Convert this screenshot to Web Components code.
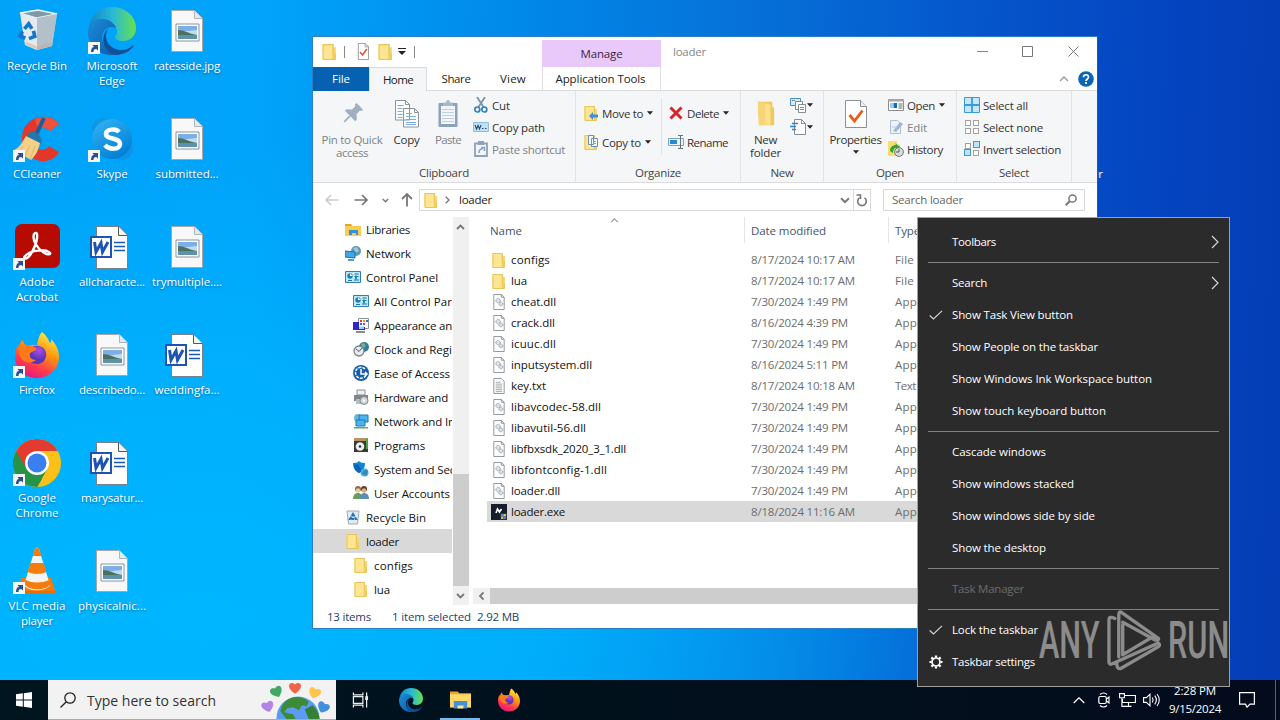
<!DOCTYPE html>
<html lang="en">
<head>
<meta charset="utf-8">
<title>Desktop</title>
<style>
  html, body { margin: 0; height: 100%; overflow: hidden; }
  body { font-family: "Open Sans", "Noto Sans", sans-serif; font-size: 11.5px; line-height: 15px; }
</style>
</head>
<body>
<desk-top></desk-top>

<script>
const folder = '<path d="M1.5 1h10v3l2.5 0v11.5h-12.5z" fill="#f7d774"/><path d="M1.5 1h9v14h-9z" fill="#fde594"/><path d="M2 1.5h9.5v9h1.8v5H2z" fill="none" stroke="#e8c55c"/><path d="M11 10.5h2v4.5h-2z" fill="#f5cd57"/>';
const page = '<path d="M2.5.5h8l4 4v15h-12z" fill="#fff" stroke="#8b8f94"/><path d="M10.5.5v4h4" fill="none" stroke="#8b8f94"/>';
const edge = `<defs><linearGradient id="ea" x1="0" y1="0" x2="1" y2="0"><stop offset="0" stop-color="#1683cb"/><stop offset=".5" stop-color="#27b9d7"/><stop offset="1" stop-color="#69e04e"/></linearGradient><linearGradient id="eb" x1="0" y1="0" x2="1" y2="1"><stop offset="0" stop-color="#1b8cd9"/><stop offset="1" stop-color="#0d5ba9"/></linearGradient></defs>
  <path d="M1 20C3 8 12 0 24 0c14 0 24 10 24 21 0 9-7 13-13 13-5 0-8-2-8-4 0-1 2-2 2-6 0-5-5-10-13-10C9 14 3 16 1 20z" fill="url(#ea)"/>
  <path d="M0 25c0-8 7-13 14-13 8 0 13 5 14 9-7-3-14 2-14 10 0 9 7 16 14 17C13 50 0 39 0 25z" fill="url(#eb)"/>
  <path d="M20 22c-6 11 3 21 13 21 5 0 9-2 11-4 1-1 2 0 1 1C40 46 33 48 27 48 15 45 11 30 20 22z" fill="#11519b"/>`;
const firefox = `<defs><linearGradient id="ff" x1=".8" y1="0" x2=".3" y2="1"><stop offset="0" stop-color="#fff44f"/><stop offset=".4" stop-color="#ff980e"/><stop offset=".75" stop-color="#ff3750"/><stop offset="1" stop-color="#e31587"/></linearGradient><radialGradient id="fp" cx=".6" cy=".25"><stop offset="0" stop-color="#b04bea"/><stop offset="1" stop-color="#5b35b8"/></radialGradient></defs>
  <path d="M29 1c5 4 6 7 8 11 2-1 1-4 1-4 5 5 8 11 8 18 0 12-10 21-22 21S2 38 2 25c0-6 2-9 3-12 0 2 1 3 1 3 0-3 2-6 4-7 0 3 2 5 6 6 3-2 6-1 8-1 1-5 2-10 5-13z" fill="url(#ff)"/>
  <path d="M15 25c0-7 4-11 11-10 5 1 8 5 7 10-1 6-5 8-9 8-5 0-9-3-9-8z" fill="url(#fp)"/><path d="M6 16c5-3 9-2 14 0 3 0 4 1 3 3l-6 3c-1 4 1 7 6 7-4 4-12 3-15-2-2-4-3-7-2-11z" fill="#ff7a18"/>`;
const panel = '<path d="M.5 2.5h15v11H.5z" fill="#bfe8fa" stroke="#2f7fb5"/><circle cx="5" cy="7" r="2.7" fill="#1680c4"/><path d="M5 4.3V7h2.7z" fill="#fff"/><path d="M9.5 5h4M9.5 7.5h4M3 11.5h4M9 11h5" stroke="#2676a8"/><path d="M10 6.5h2v4h-2z" fill="#1b8ac9"/>';
const tile = (x, y, on) => `<rect x="${x}" y="${y}" width="${on ? 6 : 5}" height="${on ? 6 : 5}" fill="${on ? '#bfe3fa' : '#fff'}" stroke="${on ? '#3b9bd8' : '#a8a09c'}"/>`;
const heart = (x, y, c, r) => `<path transform="translate(${x} ${y}) rotate(${r})" d="M0 6C-11-1-5-8 0-3.500 5-8 11-1 0 6z" fill="${c}"/>`;

const ICONS = {
  folder: ['0 0 16 16', folder],
  qatCheck: ['0 0 16 20', page + '<path d="M4.5 10.5l3 3.5 5-7" fill="none" stroke="#e2572b" stroke-width="1.8"/>'],
  down: ['0 0 7 4', '<path d="M0 0h7L3.5 4z" fill="#222"/>'],
  qatDown: ['0 0 8 7', '<path d="M0 .5h8" stroke="#222"/><path d="M0 3h8L4 7z" fill="#222"/>'],
  min: ['0 0 11 11', '<path d="M0 5.5h11" stroke="#888"/>'],
  max: ['0 0 11 11', '<path d="M.5.5h10v10H.5z" fill="none" stroke="#777"/>'],
  close: ['0 0 11 11', '<path d="M.5.5l10 10M10.5.5l-10 10" stroke="#777"/>'],
  up: ['0 0 10 6', '<path d="M1 5l4-4 4 4" fill="none" stroke="#999" stroke-width="1.400"/>'],
  help: ['0 0 16 16', '<circle cx="8" cy="8" r="7.8" fill="#0a65b4"/><path d="M5.5 6.2C5.5 3 10.5 3 10.5 6c0 2-2.5 2-2.5 4M8 11v2" fill="none" stroke="#fff" stroke-width="1.7"/>'],
  pin: ['0 0 24 24', '<g transform="rotate(45 12 12)"><path d="M7 0h10v2.500l-1.500 1v5l4.500 4v2.500H4v-2.500l4.500-4v-5L7 2.500z" fill="#9fb0c2"/><path d="M12 15v9" stroke="#9fb0c2" stroke-width="2"/></g>'],
  copy: ['0 0 26 30', '<path d="M1.500 1.500h10l4 4V21h-14zM9.500 9.500h11l4 4V28h-15z" fill="#fff" stroke="#8b939c"/><path d="M11.500 1.500v4h4M20.500 9.500v4h4" fill="none" stroke="#8b939c"/><path d="M3.500 6.500h6M3.500 9.500h5M3.500 12.500h5M3.500 15.500h5M3.500 18.500h5M12 14.500h6M12 17.500h10M12 20.500h10M12 23.500h10M12 25.500h10" stroke="#78aee0"/>'],
  paste: ['0 0 22 30', '<rect x="1.500" y="4" width="19" height="24" rx="1" fill="#8da2ba"/><path d="M4 7h14v18H4z" fill="#f0f5fa"/><path d="M5 10.500h12M5 13.500h12M5 16.500h12M5 19.500h12M5 22.500h12" stroke="#c3d0de"/><path d="M6 7V3.500h3C9 0 13 0 13 3.500h3V7z" fill="#aab9ca"/>'],
  cut: ['0 0 16 16', '<path d="M4 0l6.500 10M12 0L5.500 10" stroke="#7794b0" stroke-width="1.800"/><circle cx="4.300" cy="12.500" r="2.500" fill="none" stroke="#2d83bd" stroke-width="1.700"/><circle cx="11.300" cy="12.500" r="2.500" fill="none" stroke="#2d83bd" stroke-width="1.700"/>'],
  path: ['0 0 16 10', '<path d="M.5.5h15v9H.5z" fill="#bfe1f7" stroke="#93bddd"/><path d="M2 3l1.500 4L5 3.500 6.500 7 8 3M9 6.500h1.500M12 6.500h1.500" fill="none" stroke="#274c70" stroke-width="1.100"/>'],
  shortcut: ['0 0 14 16', '<path d="M1 2.500h12V15H1z" fill="#f2f6fa" stroke="#8da2ba" stroke-width="1.800"/><path d="M4 0h6v4H4z" fill="#8da2ba"/><path d="M5 12c0-3 1-4 3-4V6.500h2.500V10" fill="none" stroke="#8da2ba" stroke-width="1.600"/>'],
  moveTo: ['0 0 16 16', folder + '<path d="M6 11l4-4v2.500h5v3h-5V15z" fill="#3f8edb"/>'],
  copyTo: ['0 0 16 16', folder + '<path d="M5.500 1.500h5v9h-5zM8.500 4.500h6v8h-6z" fill="#f4faff" stroke="#6b90b5"/><path d="M10 7.500h3M10 9.500h3" stroke="#7aa7d5"/>'],
  del: ['0 0 14 14', '<path d="M1.500 1.500l11 11M12.500 1.500l-11 11" stroke="#d9232b" stroke-width="3"/>'],
  rename: ['0 0 16 14', '<path d="M.5 3.500h15v7H.5z" fill="#e8f3fb" stroke="#75a6cb"/><path d="M2 5h7v4H2z" fill="#2c88cc"/><path d="M12.500.500v13M10 .5h5M10 13.500h5" stroke="#66717c"/>'],
  newFolder: ['0 0 22 28', '<path d="M2 1h16v6h2v20H3z" fill="#efc860"/><path d="M2 1l14 3v22L4 27z" fill="#fde08a"/><path d="M2 1h5l3 2v23l-6 1z" fill="#f7d478"/>'],
  newItem: ['0 0 16 16', '<path d="M.5 1.500h10v7H.5z" fill="#d5eaf8" stroke="#4a8fbe"/><path d="M5.500 4.500h7v8h-7z" fill="#fff" stroke="#848c94"/><path d="M8.500 7.500h7v8h-7z" fill="#fff" stroke="#848c94"/><path d="M10 10.500h4M10 12.500h4M2 3.500h3" stroke="#848c94"/>'],
  easy: ['0 0 16 16', '<path d="M4.500.500h7l4 4v11h-11z" fill="#fff" stroke="#848c94"/><path d="M11.500.500v4h4" fill="none" stroke="#848c94"/><path d="M2 4.500h6M0 7.500h6M2 10.500h4" stroke="#2c83c5" stroke-width="1.500"/>'],
  props: ['0 0 22 28', '<path d="M.5.500h15l6 6v21H.5z" fill="#fff" stroke="#8d9195"/><path d="M15.500.500v6h6" fill="#eee" stroke="#8d9195"/><path d="M4.500 15l5 6 8-10.500" fill="none" stroke="#e85c1c" stroke-width="2.800"/>'],
  open: ['0 0 16 12', '<path d="M.5.500h15v11H.5z" fill="#fff" stroke="#8a8d90"/><path d="M0 0h16v2.500H0z" fill="#a6a6a6"/><path d="M2 4h3v5H2z" fill="#9fcdf0"/><path d="M5.500 4H9v5H5.500z" fill="#0b6fc0"/><path d="M10.500 5h4M10.500 7h4M10.500 9h4" stroke="#666"/>'],
  edit: ['0 0 16 16', '<path d="M2.500 1.500h7l3 3v10h-10z" fill="#edf3fa" stroke="#aebfd1"/><path d="M5 12l7-9 3 2-7 8z" fill="#9db5ce"/><path d="M4 8h5" stroke="#b5c8dc"/>'],
  history: ['0 0 16 16', '<path d="M0 0h9v3l3 1v11H0z" fill="#f9dd72"/><path d="M2 10c0-4 3-6 6-6l-1-2 5 4-4 3V7c-2 0-3 2-3 5z" fill="#34a234"/><circle cx="11" cy="11" r="4.400" fill="#d8ddd8" stroke="#6d7770"/><path d="M11 8v3H8" fill="none" stroke="#555"/>'],
  selAll: ['0 0 16 16', '<path d="M.5.500h15v15H.5z" fill="#c5e6fb" stroke="#3b9bd8"/><path d="M8 0v16M0 8h16" stroke="#3b9bd8" stroke-width="1.800"/>'],
  selNone: ['0 0 16 16', tile(1.5, 1.5) + tile(9.5, 1.5) + tile(1.5, 9.5) + tile(9.5, 9.5)],
  selInv: ['0 0 16 16', tile(1.5, 2.5) + tile(9.5, .5, 1) + tile(.5, 8.5, 1) + tile(9.5, 9.5)],
  back: ['0 0 14 12', '<path d="M1 6h12.500M6 1L1 6l5 5" fill="none" stroke="#ccc" stroke-width="1.500"/>'],
  fwd: ['0 0 14 12', '<path d="M.5 6H13M8 1l5 5-5 5" fill="none" stroke="#777" stroke-width="1.700"/>'],
  upArrow: ['0 0 12 14', '<path d="M6 13.500V1M1 6l5-5 5 5" fill="none" stroke="#777" stroke-width="1.800"/>'],
  chev: ['0 0 9 6', '<path d="M1 1l3.500 3.500L8 1" fill="none" stroke="#777" stroke-width="1.800"/>'],
  right: ['0 0 5 8', '<path d="M.7.700L4 4 .7 7.300" fill="none" stroke="#777" stroke-width="1.300"/>'],
  refresh: ['0 0 12 13', '<path d="M3.500 4.300A4.300 4.300 0 1 0 8.500 4.300M.5 1.500h4v4" transform="translate(0 -.5)" fill="none" stroke="#777" stroke-width="1.600"/>'],
  glass: ['0 0 12 12', '<circle cx="7.500" cy="4.500" r="3.600" fill="none" stroke="#777" stroke-width="1.500"/><path d="M5 7L.7 11.300" stroke="#777" stroke-width="2"/>'],
  libraries: ['0 0 16 16', '<path d="M0 3h6l2 2h8v10H0z" fill="#f9cd4f"/><path d="M0 3h6l1 2H0z" fill="#e0a52d"/><path d="M4 9h9v5h-2v-2H7v2H4z" fill="#3a8fd2"/>'],
  network: ['0 0 16 16', '<circle cx="11" cy="6" r="5" fill="#5d98b8"/><path d="M8 3l4-1 2 4-3 2z" fill="#9cc9d3"/><path d="M0 6l10 1v6L0 12z" fill="#3fa8e8" stroke="#1c70aa"/><path d="M3 15h6" stroke="#2579b5" stroke-width="1.500"/>'],
  panel: ['0 0 16 16', panel],
  appearance: ['0 0 16 16', '<path d="M5.500 1.500h10v10h-10z" fill="#fff" stroke="#89909a"/><path d="M7 3h2v2H7z" fill="#e33"/><path d="M10 3h2v2h-2z" fill="#f80"/><path d="M13 3h2v2h-2zM7 6h2v2H7z" fill="#36c"/><path d="M10 6h2v2h-2z" fill="#b3c"/><path d="M0 5h6v5h6v3H0z" fill="#3422cc"/><path d="M6 10l5-1v3H6z" fill="#8fd6ff"/><path d="M3 15h9" stroke="#666" stroke-width="1.500"/>'],
  clock: ['0 0 16 16', '<circle cx="11" cy="6" r="5" fill="#347e9b"/><path d="M8 3l3-1 2 3-3 2z" fill="#77b28b"/><circle cx="6" cy="10" r="5" fill="#e8edf0" stroke="#7b858d" stroke-width="1.300"/><path d="M3 8l3 2.500L9 7" fill="none" stroke="#475866"/>'],
  ease: ['0 0 16 16', '<circle cx="8" cy="8" r="8" fill="#155fae"/><path d="M12 4a5.500 5.500 0 1 0 1 6" fill="none" stroke="#fff" stroke-width="1.400" stroke-dasharray="3 1"/><path d="M8 4v5h6M12 7l2 2-2 2" fill="none" stroke="#fff" stroke-width="1.500"/>'],
  hardware: ['0 0 16 16', '<path d="M4 1h8v5H4z" fill="#eef1f3" stroke="#8a9096"/><path d="M1 6h14v6H1z" fill="#7e858b"/><path d="M3 10h8v5H3z" fill="#b8bec4"/><circle cx="11" cy="11.500" r="4" fill="#cfd6da" stroke="#7e878e"/><circle cx="11" cy="11.500" r="1.200" fill="#fff"/>'],
  netInt: ['0 0 16 16', '<circle cx="5" cy="5" r="4" fill="#6db8d6"/><path d="M6 2h9v7H6z" fill="#49b5ec" stroke="#1d7bb5"/><path d="M3 7h9v6H3z" fill="#49b5ec" stroke="#1d7bb5"/><path d="M1 14h14v1.500H1z" fill="#5fa95d"/>'],
  programs: ['0 0 16 16', '<path d="M1 1h14v14H1z" fill="#3c3933"/><path d="M1 1h14v3H1z" fill="#b89565"/><path d="M13 2h2v10h-2z" fill="#4ba24b"/><circle cx="7" cy="9.500" r="4.300" fill="#eceff1"/><circle cx="7" cy="9.500" r="1.300" fill="#333"/>'],
  system: ['0 0 16 16', '<path d="M0 2c4 0 5-1 6-2 2 2 4 2 6 2 0 6-3 9-6 10C2 10 0 7 0 2z" fill="#1283d6"/><path d="M5 3l4 7-3 2C2 10 1 7 1 4z" fill="#0d62b8"/><circle cx="11.500" cy="11.500" r="4" fill="#37aef0"/><path d="M9 12l3-3 3 1-2 5z" fill="#3d88a8"/>'],
  users: ['0 0 16 16', '<circle cx="5" cy="4" r="3" fill="#8c6b3f"/><circle cx="5" cy="5.500" r="2.200" fill="#efc79d"/><circle cx="11" cy="4" r="3" fill="#54402a"/><circle cx="11" cy="5.500" r="2.200" fill="#dfae82"/><path d="M0 14c0-4 2-6 5-6s4 2 4 6z" fill="#6c9d5b"/><path d="M7 14c0-4 2-6 4-6 3 0 5 2 5 6z" fill="#5b8fb5"/>'],
  binSmall: ['0 0 16 16', '<path d="M2 2h12l-1.500 13h-9z" fill="#e3eaf0" stroke="#9eabb5"/><path d="M8 5l3 5H5z" fill="none" stroke="#1d71c2" stroke-width="2" stroke-dasharray="3 .8"/>'],
  dll: ['0 0 14 17', '<path d="M1.500.500h8l3 3v13h-11z" fill="#fff" stroke="#8c9297"/><path d="M9.500.500v3h3" fill="none" stroke="#8c9297"/><circle cx="6" cy="7" r="2.300" fill="#dfe5e9" stroke="#7f8c96" stroke-dasharray="1 .5"/><circle cx="9" cy="10.500" r="2" fill="#dfe5e9" stroke="#7f8c96" stroke-dasharray="1 .5"/>'],
  txt: ['0 0 14 17', '<path d="M1.500.500h8l3 3v13h-11z" fill="#fff" stroke="#8c9297"/><path d="M3.500 4.500h5M3.500 6.500h7M3.500 8.500h7M3.500 10.500h7M3.500 12.500h7M3.500 14.500h7" stroke="#9ca3a8"/>'],
  exe: ['0 0 16 16', '<path d="M0 0h16v16H0z" fill="#161d2c"/><path d="M5 9l1.500-4 2 3 2-3" fill="none" stroke="#fff" stroke-width="1.700"/><path d="M9 9h7v7H9z" fill="#26344a"/><path d="M10 10h2.500v2.500H10z" fill="#5591cf"/><path d="M12.500 10H15v2.500h-2.500z" fill="#d8c456"/><path d="M10 12.500h2.500V15H10z" fill="#cbb34a"/><path d="M12.500 12.500H15V15h-2.500z" fill="#4585c4"/>'],
  menuRight: ['0 0 8 14', '<path d="M1 1l6 6-6 6" fill="none" stroke="#ddd" stroke-width="1.100"/>'],
  check: ['0 0 14 10', '<path d="M.7 5.500L4.500 9 13 .8" fill="none" stroke="#d8d8d8" stroke-width="1.100"/>'],
  gear: ['0 0 14 14', '<circle cx="7" cy="7" r="4" fill="none" stroke="#fff" stroke-width="1.700"/><path d="M7 .5v2M7 11.500v2M.5 7h2M11.500 7h2M2.400 2.400l1.400 1.400M10.200 10.200l1.400 1.400M2.400 11.600l1.400-1.400M10.200 3.800l1.400-1.400" stroke="#fff" stroke-width="2.200"/>'],
  play: ['0 0 56 62', '<g fill="none" stroke="#fff" stroke-width="3.400" stroke-linejoin="round" stroke-linecap="round"><path d="M52 28L15 2Q12 0 12 5v42M16 15v30l30-18M52 28q2 2-3 2L16 12M8 8Q2 5 2 10v42q0 4 4 2l44-20M10 54q0 6 4 5l38-22q3-2 0-4"/></g>'],
  // taskbar
  start: ['0 0 16 16', '<path d="M0 2.300l6.800-1v6.200H0zM7.800 1.200L16 0v7.500H7.800zM0 8.500h6.800v6.200L0 13.700zM7.800 8.500H16V16l-8.200-1.200z" fill="#fff"/>'],
  search: ['0 0 16 16', '<circle cx="10" cy="6" r="5.200" fill="none" stroke="#222" stroke-width="1.300"/><path d="M6.300 9.700L.5 15.500" stroke="#222" stroke-width="1.300"/>'],
  earth: ['0 0 72 40', '<circle cx="37" cy="39" r="22" fill="#5c9cf0"/><path d="M29 19c7-3 14-1 19 3l-2 5-5-1-3 5-6-3-6 1-3 4 9 2 3 6h-9l-7-9c1-6 5-11 10-13z" fill="#3c8c35"/><path d="M44 30l8-4c4 4 7 9 7 14H48l-2-5z" fill="#357f38"/>' + heart(6, 27, '#b184e5', -15) + heart(15, 12, '#43a863', -25) + heart(34, 8, '#f06548', 0) + heart(54, 13, '#ffc44b', 20) + heart(63, 28, '#4290dc', 25)],
  taskView: ['0 0 18 16', '<path d="M1.500 4.500h10v7h-10zM1.500 0v2.500h10V0M1.500 16v-2.500h10V16M15.500 0v16" fill="none" stroke="#eee" stroke-width="1.300"/><path d="M14 4h3v4h-3z" fill="#eee"/>'],
  edge: ['0 0 48 48', edge],
  explorer: ['0 0 22 20', '<path d="M0 1h8l2 2h12v4H0z" fill="#e5a72f"/><path d="M0 4h22v14H0z" fill="#ffd866"/><path d="M4 11h14v8h-4v-3H8v3H4z" fill="#4392d5"/><path d="M8 16h6v3H8z" fill="#ffe69a"/>'],
  firefox: ['0 0 48 48', firefox],
  trayUp: ['0 0 12 7', '<path d="M.7 6L6 .8 11.300 6" fill="none" stroke="#fff" stroke-width="1.200"/>'],
  meet: ['0 0 12 16', '<rect x=".8" y="4.500" width="7.500" height="7" rx="1.500" fill="none" stroke="#fff" stroke-width="1.200"/><path d="M8.500 7l2.500-2v6L8.500 9M2 2.500C4 .5 7 .5 9 2.500M2 13.500c2 2 5 2 7 0" fill="none" stroke="#fff" stroke-width="1.100"/>'],
  net: ['0 0 17 14', '<path d="M5 2.500h11.400v7H3.500V6M9.500 9.500V13M6.500 13.400h6M.6.600h4.800v4.200H.6zM2.900 5v8.400h4" fill="none" stroke="#fff" stroke-width="1.100"/>'],
  sound: ['0 0 17 14', '<path d="M.6 4.600h2.800L7 1.200v11.600L3.400 9.400H.6z" fill="none" stroke="#fff" stroke-width="1.100"/><path d="M9.300 4.500c1 1.500 1 3.500 0 5M11.700 2.700c2 2.500 2 6 0 8.600M14 1c3 3.500 3 8.500 0 12" fill="none" stroke="#fff" stroke-width="1.100"/>'],
  note: ['0 0 16 16', '<path d="M.6.600h14.800v11.600H11L8 15.200l-1.500-3H.6z" fill="none" stroke="#fff" stroke-width="1.200"/>'],
  // desktop
  bin: ['0 0 48 48', '<path d="M9 6l15 5 20-5-5 33-15 4-11-5z" fill="#c9d4dc"/><path d="M7 6l18-3 19 4-20 4z" fill="#7f99a9" stroke="#eef5f9" stroke-width="1.300"/><path d="M7 6l17 5v32l-12-5z" fill="#e4eaee"/><path d="M24 11l20-4-5 32-15 4z" fill="#b4c0c9"/><g transform="translate(6.500 7.500) rotate(6) scale(.92)" fill="none" stroke="#1676c8" stroke-width="4"><path d="M7 15l4-6 4 5M17 16l2 6-6 3M9 25l-6-2 2-5"/></g><path d="M13 36l11 5 14-4" fill="none" stroke="#d3a68b" stroke-width="3" opacity=".5"/>'],
  image: ['0 0 48 48', '<path d="M8.500 3.500h23l8 8v33h-31z" fill="#f8f8f8" stroke="#a6a6a6"/><path d="M31.500 3.500v8h8" fill="#dcecf3" stroke="#b0b4b6"/><path d="M13 17h23v17H13z" fill="#fff" stroke="#8994a0"/><path d="M15 19h19v13H15z" fill="#bcdcf2"/><path d="M15 19h19v4l-19 2z" fill="#7eaee8"/><path d="M15 23c6 0 9 3 19 5H15z" fill="#49715d"/><path d="M15 28h19v4H15z" fill="#5e91ac"/>'],
  word: ['0 0 48 48', '<path d="M8.500 3.500h22l9 9v33h-31z" fill="#fff" stroke="#77818b"/><path d="M30.500 3.500v9h9" fill="#f4f4f4" stroke="#555"/><path d="M26 19.500h11M26 23.500h11M26 27.500h11" stroke="#1c58b8" stroke-width="1.400"/><path d="M3 14h20v20H3z" fill="#fff" stroke="#1d53b3" stroke-width="2"/><path d="M6.500 19l1.500 10 5-9 1.500 9 5.500-10" fill="none" stroke="#1d53b3" stroke-width="3"/>'],
  ccleaner: ['0 0 48 48', '<path d="M46 9c-7-11-30-10-36 7-4 14 4 27 17 30 8 1 15-2 19-9l-10-6c-5 7-15 4-16-7 0-11 12-14 17-8z" fill="#e2382b"/><path d="M46 9l-9 7c-3-4-8-4-12-2L22 4c9-4 19-2 24 5z" fill="#ee523f"/><path d="M31 3l-9 19" stroke="#17629c" stroke-width="4"/><path d="M18 16l8 3 3 7-2 4-11-5-2-4z" fill="#2477ae"/><path d="M13 21l14 7c-2 8-4 12-9 17L1 35c5-2 8-7 12-14z" fill="#f4cf88"/><path d="M10 31l-4 7M17 30l-5 11M22 31l-5 13" stroke="#cf9d4f" opacity=".5"/>'],
  skype: ['0 0 48 48', '<defs><linearGradient id="sk" x1="0" y1="0" x2=".6" y2="1"><stop offset="0" stop-color="#36b5f3"/><stop offset="1" stop-color="#0081d7"/></linearGradient></defs><circle cx="15" cy="14" r="11" fill="#158fd8" opacity=".6"/><circle cx="34" cy="34" r="11" fill="#178bd8" opacity=".6"/><circle cx="24" cy="24" r="20" fill="url(#sk)"/><path d="M31 17c-3-4-13-3-13 2 0 6 14 3 14 10 0 6-11 6-15 1" fill="none" stroke="#fff" stroke-width="4.500"/>'],
  acrobat: ['0 0 48 48', '<rect x="2" y="1" width="45" height="44" rx="7" fill="#b60b00"/><path d="M21 11c5-5 4 8-2 18-4 8-10 8-7 4 5-5 15-7 22-5 7 3 1 5-4 1-6-4-11-12-9-18z" fill="none" stroke="#fff" stroke-width="2.400"/>'],
  chrome: ['0 0 48 48', '<circle cx="24" cy="24" r="24" fill="#fbc116"/><path d="M24 24H3.200l10.400 18L24 48l5-8z" fill="#269448"/><path d="M3.200 12A24 24 0 0 0 24 48l10.400-18z" fill="#269448"/><path d="M3.200 12A24 24 0 0 1 44.800 12H24L13.600 30z" fill="#e33b2e"/><circle cx="24" cy="24" r="12" fill="#fff"/><circle cx="24" cy="24" r="9.500" fill="#397ff0"/>'],
  vlc: ['0 0 48 48', '<g transform="translate(-2 0)"><path d="M11 31h29l5 15H12L5 43z" fill="#f57c0b"/><path d="M24 2q2-3 4 0l11 36c-4 7-22 7-26 0z" fill="#f4f4f4"/><path d="M24 2q2-3 4 0l2.500 7h-9zM19.500 16h13l3 9q-9 4-19 0zM14.500 33q11 5 24 0l1 4c-4 7-22 7-26 0z" fill="#f57c0b"/><path d="M11 45h34" stroke="#d95f05"/></g>'],
  link: ['0 0 12 12', '<path d="M0 0h12v12H0z" fill="#f6f6f6"/><path d="M3 10c0-3 1-5 3-5L4.500 3H10v5.500L8.300 7C6 7 5.500 8 5.500 10z" fill="#284f8f"/>']
};

const shadow = (el, html) => { el.attachShadow({ mode: 'open' }).innerHTML = html; };

class UiIcon extends HTMLElement {
  connectedCallback() {
    if (this.shadowRoot) return;
    const [box, art] = ICONS[this.getAttribute('name')];
    const w = this.getAttribute('w') || 16;
    const h = this.getAttribute('h') || w;
    shadow(this, `<style>:host{display:block;flex:none;width:${w}px;height:${h}px}svg{display:block}</style>
      <svg width="${w}" height="${h}" viewBox="${box}">${art}</svg>`);
  }
}

// One line of text, tracked so that it fills the width in its "w" attribute
class UiText extends HTMLElement {
  connectedCallback() {
    if (this.shadowRoot) return;
    shadow(this, '<style>:host{display:block;flex:none;white-space:pre}span{display:inline-block}</style><span><slot></slot></span>');
    const span = this.shadowRoot.querySelector('span');
    const w = +this.getAttribute('w');
    if (w) {
      const natural = span.getBoundingClientRect().width;
      span.style.letterSpacing = `${(w - natural) / this.textContent.length}px`;
    }
  }
}

class DesktopIcon extends HTMLElement {
  connectedCallback() {
    const lines = this.getAttribute('label').split('|').map(s => s.split('~'));
    shadow(this, `
      <style>
        :host { display: flex; flex-direction: column; align-items: center; height: 108px; color: #fff; }
        .pic { position: relative; height: 51px; }
        .link { position: absolute; left: 0; top: 35px; }
        ui-text { text-shadow: 0 1px 2px rgba(0, 40, 90, .55); }
      </style>
      <div class="pic"><ui-icon name="${this.getAttribute('icon')}" w="48"></ui-icon>
      ${this.hasAttribute('link') ? '<ui-icon class="link" name="link" w="12"></ui-icon>' : ''}</div>
      ${lines.map(([t, w]) => `<ui-text w="${w}">${t}</ui-text>`).join('')}`);
  }
}

class RibbonGroup extends HTMLElement {
  connectedCallback() {
    shadow(this, `
      <style>
        :host { display: flex; flex-direction: column; flex: none; box-sizing: border-box; height: 91px;
          width: ${this.getAttribute('w')}px; border-right: 1px solid #e2e3e4; color: #444; }
        .body { display: flex; height: 74px; }
        .name { display: flex; justify-content: center; }
      </style>
      <div class="body"><slot></slot></div>
      <div class="name"><ui-text w="${this.getAttribute('lw')}">${this.getAttribute('label')}</ui-text></div>`);
  }
}

class RibbonBig extends HTMLElement {
  connectedCallback() {
    const lines = this.getAttribute('label').split('|').map(s => s.split('~'));
    const [iw, ih] = this.getAttribute('size').split('x');
    shadow(this, `
      <style>
        :host { display: flex; flex-direction: column; align-items: center; flex: none; width: ${this.getAttribute('w')}px; line-height: 13px; color: #333; }
        :host([off]) { color: #7d8389; }
        .pic { display: flex; align-items: center; height: 42px; padding-top: 3px; box-sizing: border-box; }
        ui-icon[name=down] { margin-top: 4px; }
      </style>
      <div class="pic"><ui-icon name="${this.getAttribute('icon')}" w="${iw}" h="${ih}"></ui-icon></div>
      ${lines.map(([t, w]) => `<ui-text w="${w}">${t}</ui-text>`).join('')}
      ${this.hasAttribute('drop') ? '<ui-icon name="down" w="6" h="4"></ui-icon>' : ''}`);
  }
}

class RibbonSmall extends HTMLElement {
  connectedCallback() {
    const [iw, ih] = (this.getAttribute('size') || '16x16').split('x');
    const label = this.getAttribute('label');
    shadow(this, `
      <style>
        :host { display: flex; align-items: center; height: 22px; color: #333; }
        :host([off]) { color: #7d8389; }
        .pic { width: 16px; margin-right: 3px; display: flex; justify-content: center; }
        :host([bare]) .pic { margin-right: 0; }
        ui-icon[name=down] { margin-left: ${this.hasAttribute('bare') ? 1 : 4}px; }
      </style>
      <div class="pic"><ui-icon name="${this.getAttribute('icon')}" w="${iw}" h="${ih}"></ui-icon></div>
      ${label ? `<ui-text w="${this.getAttribute('lw')}">${label}</ui-text>` : ''}
      ${this.hasAttribute('drop') ? '<ui-icon name="down" w="6" h="4"></ui-icon>' : ''}`);
  }
}

class ExplorerRibbon extends HTMLElement {
  connectedCallback() {
    shadow(this, `
      <style>
        :host { display: flex; height: 91px; background: #f5f6f7; border-bottom: 1px solid #dadbdc; }
        .col { display: flex; flex-direction: column; flex: none; padding-top: 3px; }
        .wide { padding-top: 11px; gap: 7px; }
        .line { border-right: 1px solid #e2e3e4; height: 57px; margin-top: 7px; padding-top: 4px; box-sizing: border-box; }
      </style>
      <ribbon-group w="263" label="Clipboard" lw="50">
        <ribbon-big style="margin-left:5px" w="68" off icon="pin" size="22x22" label="Pin to Quick~61|access~32"></ribbon-big>
        <ribbon-big w="41" icon="copy" size="26x30" label="Copy~26"></ribbon-big>
        <ribbon-big w="42" off icon="paste" size="22x30" label="Paste~26"></ribbon-big>
        <div class="col" style="margin-left:4px">
          <ribbon-small icon="cut" label="Cut" lw="18"></ribbon-small>
          <ribbon-small icon="path" size="16x10" label="Copy path" lw="53"></ribbon-small>
          <ribbon-small off icon="shortcut" size="14x16" label="Paste shortcut" lw="73"></ribbon-small>
        </div>
      </ribbon-group>
      <ribbon-group w="165" label="Organize" lw="46">
        <div class="col wide line" style="padding-left:7px;width:86px">
          <ribbon-small icon="moveTo" label="Move to" lw="41" drop></ribbon-small>
          <ribbon-small icon="copyTo" label="Copy to" lw="39" drop></ribbon-small>
        </div>
        <div class="col wide" style="padding-left:6px">
          <ribbon-small icon="del" size="14x14" label="Delete" lw="32" drop></ribbon-small>
          <ribbon-small icon="rename" size="16x14" label="Rename" lw="41"></ribbon-small>
        </div>
      </ribbon-group>
      <ribbon-group w="83" label="New" lw="23">
        <ribbon-big style="margin-left:4px" w="41" icon="newFolder" size="20x27" label="New~23|folder~31"></ribbon-big>
        <div class="col" style="margin-left:4px">
          <ribbon-small bare icon="newItem" drop></ribbon-small>
          <ribbon-small bare icon="easy" drop></ribbon-small>
        </div>
      </ribbon-group>
      <ribbon-group w="133" label="Open" lw="28">
        <ribbon-big style="margin-left:4px" w="55" icon="props" size="22x28" label="Properties~52" drop></ribbon-big>
        <div class="col" style="margin-left:5px">
          <ribbon-small icon="open" size="16x12" label="Open" lw="28" drop></ribbon-small>
          <ribbon-small off icon="edit" label="Edit" lw="20"></ribbon-small>
          <ribbon-small icon="history" label="History" lw="36"></ribbon-small>
        </div>
      </ribbon-group>
      <ribbon-group w="115" label="Select" lw="30">
        <div class="col" style="margin-left:7px">
          <ribbon-small icon="selAll" label="Select all" lw="45"></ribbon-small>
          <ribbon-small icon="selNone" label="Select none" lw="60"></ribbon-small>
          <ribbon-small icon="selInv" label="Invert selection" lw="78"></ribbon-small>
        </div>
      </ribbon-group>`);
  }
}

const NAV = [
  ['libraries', 'Libraries', 44, 0], ['network', 'Network', 45, 0], ['panel', 'Control Panel', 72, 0],
  ['panel', 'All Control Par', 78, 1], ['appearance', 'Appearance an', 78, 1], ['clock', 'Clock and Regi', 78, 1],
  ['ease', 'Ease of Access', 76, 1], ['hardware', 'Hardware and', 74, 1], ['netInt', 'Network and In', 81, 1],
  ['programs', 'Programs', 51, 1], ['system', 'System and Sec', 81, 1], ['users', 'User Accounts', 76, 1],
  ['binSmall', 'Recycle Bin', 60, 0], ['folder', 'loader', 33, 0, 1], ['folder', 'configs', 39, 1], ['folder', 'lua', 16, 1]
];

class NavPane extends HTMLElement {
  connectedCallback() {
    shadow(this, `
      <style>
        :host { display: flex; flex: none; width: 156px; height: 388px; color: #111; }
        .tree { width: 139px; overflow: hidden; }
        .row { display: flex; align-items: center; height: 24px; padding-left: 32px; gap: 5px; }
        .sub { padding-left: 40px; }
        .on { background: #d9d9d9; }
        .bar { display: flex; flex-direction: column; align-items: center; margin-left: 1px; width: 16px; background: #f0f0f0; }
        .bar ui-icon { margin: 7px 1px 6px 0; }
        .thumb { width: 16px; height: 112px; background: #cdcdcd; margin-top: auto; }
        .flip { transform: rotate(180deg); }
      </style>
      <div class="tree">${NAV.map(([i, t, w, sub, on]) => `<div class="row${sub ? ' sub' : ''}${on ? ' on' : ''}"><ui-icon name="${i}"></ui-icon><ui-text w="${w}">${t}</ui-text></div>`).join('')}</div>
      <div class="bar"><ui-icon class="flip" name="chev" w="9" h="6"></ui-icon><div class="thumb"></div><ui-icon name="chev" w="9" h="6"></ui-icon></div>`);
  }
}

const FILES = [
  ['folder', 'configs', 39, '8/17/2024 10:17 AM', 104, 'File f', 26], ['folder', 'lua', 16, '8/17/2024 10:17 AM', 104, 'File f', 26],
  ['dll', 'cheat.dll', 45, '7/30/2024 1:49 PM', 97, 'App', 22], ['dll', 'crack.dll', 44, '8/16/2024 4:39 PM', 97, 'App', 22],
  ['dll', 'icuuc.dll', 45, '7/30/2024 1:49 PM', 97, 'App', 22], ['dll', 'inputsystem.dll', 81, '8/16/2024 5:11 PM', 97, 'App', 22],
  ['txt', 'key.txt', 35, '8/17/2024 10:18 AM', 104, 'Text', 21], ['dll', 'libavcodec-58.dll', 90, '7/30/2024 1:49 PM', 97, 'App', 22],
  ['dll', 'libavutil-56.dll', 75, '7/30/2024 1:49 PM', 97, 'App', 22], ['dll', 'libfbxsdk_2020_3_1.dll', 115, '7/30/2024 1:49 PM', 97, 'App', 22],
  ['dll', 'libfontconfig-1.dll', 96, '7/30/2024 1:49 PM', 97, 'App', 22], ['dll', 'loader.dll', 49, '7/30/2024 1:49 PM', 97, 'App', 22],
  ['exe', 'loader.exe', 54, '8/18/2024 11:16 AM', 104, 'App', 22]
];

class FileList extends HTMLElement {
  connectedCallback() {
    shadow(this, `
      <style>
        :host { display: flex; flex-direction: column; flex: 1; height: 388px; padding-left: 4px; min-width: 0; }
        .head, .row { display: grid; grid-template-columns: 258px 144px 1fr; align-items: center; }
        .head { height: 26px; margin-left: 14px; color: #44546f; position: relative; margin-bottom: 6px; }
        .head > div { padding-left: 6px; height: 26px; display: flex; align-items: center; border-right: 1px solid #e5e5e5; }
        .head > div:first-child { padding-left: 3px; }
        .sort { position: absolute; left: 123px; top: 1px; }
        .row { height: 21px; margin-left: 14px; color: #6d6d6d; }
        .row > * { padding-left: 6px; }
        .row .name { display: flex; align-items: center; gap: 4px; padding-left: 4px; color: #111; }
        .on { background: #d9d9d9; }
        .bar { display: flex; align-items: center; height: 16px; margin: auto 0 1px; background: #f0f0f0; }
        .bar ui-icon { transform: rotate(90deg); margin: 0 4px; }
        .thumb { flex: 1; height: 16px; background: #cdcdcd; }
      </style>
      <div class="head"><div><ui-text w="32">Name</ui-text></div><div><ui-text w="75">Date modified</ui-text></div><div><ui-text w="25">Type</ui-text></div>
        <ui-icon class="sort" name="up" w="9" h="5"></ui-icon></div>
      ${FILES.map(([i, n, nw, d, dw, t, tw], k) => `<div class="row${k === 12 ? ' on' : ''}"><div class="name"><ui-icon name="${i}"></ui-icon><ui-text w="${nw}">${n}</ui-text></div><ui-text w="${dw}">${d}</ui-text><ui-text w="${tw}">${t}</ui-text></div>`).join('')}
      <div class="bar"><ui-icon name="chev" w="9" h="6"></ui-icon><div class="thumb"></div></div>`);
  }
}

class ExplorerWindow extends HTMLElement {
  connectedCallback() {
    shadow(this, `
      <style>
        :host { position: absolute; left: 312px; top: 36px; width: 786px; height: 593px; box-sizing: border-box; background: #fff;
          border: 1px solid #2b7fc0; border-right-color: #1c58b8; display: flex; flex-direction: column; color: #222; overflow: hidden; }
        .title { display: flex; height: 30px; }
        .qat { display: flex; align-items: center; width: 229px; box-sizing: border-box; padding-left: 8px; height: 29px; }
        .qat i { width: 1px; height: 12px; background: #8a8a8a; }
        .manage { width: 119px; height: 27px; margin-top: 3px; background: #e9c9f9; display: flex; justify-content: center; align-items: center; color: #382540; }
        .cap { color: #888; margin: 7px auto 0 12px; }
        .ctl { width: 45.500px; height: 28px; display: flex; justify-content: center; align-items: center; }
        .tabs { display: flex; height: 23px; align-items: stretch; border-bottom: 1px solid #dadbdc; }
        .tabs > div { display: flex; align-items: center; justify-content: center; box-sizing: border-box; }
        .file { width: 56px; background: #0662b0; color: #fff; }
        .tabs > .file, .tabs > .home { height: 24px; padding-bottom: 1px; }
        .home { width: 58px; background: #f5f6f7; border: 1px solid #dadbdc; border-bottom: 0; }
        .app { width: 119px; border: solid #e3dde6; border-width: 0 1px; }
        .nav { display: flex; align-items: center; height: 35px; }
        .addr, .find { display: flex; align-items: center; height: 22px; border: 1px solid #d9d9d9; box-sizing: border-box; }
        .addr ui-text, .find ui-text { margin-bottom: 2px; }
        .addr { width: 452px; padding-left: 3px; }
        .find { width: 202px; margin-left: 12px; padding: 0 7px 0 8px; justify-content: space-between; color: #666; }
        .ref { border-left: 1px solid #d9d9d9; height: 20px; width: 16px; display: flex; align-items: center; justify-content: center; margin-left: 3px; }
        .main { display: flex; height: 388px; }
        .status { display: flex; gap: 21px; padding: 4px 14px; color: #26416e; }
      </style>
      <div class="title">
        <div class="qat"><ui-icon name="folder" w="17"></ui-icon><i style="margin:0 10px 0 6px"></i><ui-icon name="qatCheck" w="16" h="17"></ui-icon>
          <ui-icon name="folder" w="17" style="margin:0 4px 0 6px"></ui-icon><ui-icon name="qatDown" w="8" h="7"></ui-icon><i style="margin-left:8px"></i></div>
        <div class="manage"><ui-text w="42">Manage</ui-text></div>
        <div class="cap"><ui-text w="33">loader</ui-text></div>
        <div class="ctl"><ui-icon name="min" w="11"></ui-icon></div>
        <div class="ctl"><ui-icon name="max" w="11"></ui-icon></div>
        <div class="ctl" style="margin-right:1px"><ui-icon name="close" w="11"></ui-icon></div>
      </div>
      <div class="tabs">
        <div class="file"><ui-text w="18">File</ui-text></div>
        <div class="home"><ui-text w="30">Home</ui-text></div>
        <div style="width:58px"><ui-text w="29">Share</ui-text></div>
        <div style="width:56px"><ui-text w="26">View</ui-text></div>
        <div class="app" style="margin-left:1px;padding-right:2px"><ui-text w="90">Application Tools</ui-text></div>
        <div style="margin-left:auto;padding-right:3px;gap:9px"><ui-icon name="up" w="10" h="6"></ui-icon><ui-icon name="help"></ui-icon></div>
      </div>
      <explorer-ribbon></explorer-ribbon>
      <div class="nav">
        <ui-icon name="back" w="14" h="12" style="margin-left:12px"></ui-icon>
        <ui-icon name="fwd" w="14" h="12" style="margin-left:15px"></ui-icon>
        <ui-icon name="chev" w="7" h="5" style="margin:0 12px 0 14px"></ui-icon>
        <ui-icon name="upArrow" w="12" h="14" style="margin-right:6px"></ui-icon>
        <div class="addr"><ui-icon name="folder"></ui-icon><ui-icon name="right" w="5" h="8" style="margin:0 9px 0 6px"></ui-icon>
          <ui-text w="33">loader</ui-text><ui-icon name="chev" w="10" h="7" style="margin-left:auto"></ui-icon><div class="ref"><ui-icon name="refresh" w="12" h="13"></ui-icon></div></div>
        <div class="find"><ui-text w="71">Search loader</ui-text><ui-icon name="glass" w="12"></ui-icon></div>
      </div>
      <div class="main"><nav-pane></nav-pane><file-list></file-list></div>
      <div class="status"><ui-text w="44">13 items</ui-text><div style="display:flex;gap:6px"><ui-text w="79">1 item selected</ui-text><ui-text w="42">2.92 MB</ui-text></div></div>`);
  }
}

class MenuItem extends HTMLElement {
  connectedCallback() {
    shadow(this, `
      <style>
        :host { display: flex; align-items: center; height: 32px; padding-right: 11px; color: #fff; }
        :host([off]) { color: #6d6d6d; }
        .mark { width: 34px; box-sizing: border-box; padding-left: 11px; }
        .arrow { margin-left: auto; }
        ui-text { margin-bottom: 2px; }
      </style>
      <div class="mark">${this.hasAttribute('mark') ? `<ui-icon name="${this.getAttribute('mark')}" w="14" h="${this.getAttribute('mark') === 'gear' ? 14 : 10}"></ui-icon>` : ''}</div>
      <ui-text w="${this.getAttribute('w')}">${this.getAttribute('label')}</ui-text>
      ${this.hasAttribute('more') ? '<ui-icon class="arrow" name="menuRight" w="8" h="14" style="margin-right:-1px"></ui-icon>' : ''}`);
  }
}

class TaskbarMenu extends HTMLElement {
  connectedCallback() {
    shadow(this, `
      <style>
        :host { position: absolute; left: 917px; top: 217px; width: 313px; height: 470px; box-sizing: border-box; padding: 8px 0;
          background: #2b2b2b; border: 1px solid #a0a0a0; font-weight: 500; }
        hr { margin: 4px 10px; border: 0; height: 1px; background: #808080; }
      </style>
      <menu-item label="Toolbars" w="44" more></menu-item><hr>
      <menu-item label="Search" w="35" more></menu-item>
      <menu-item label="Show Task View button" w="121" mark="check"></menu-item>
      <menu-item label="Show People on the taskbar" w="146"></menu-item>
      <menu-item label="Show Windows Ink Workspace button" w="200"></menu-item>
      <menu-item label="Show touch keyboard button" w="154"></menu-item><hr>
      <menu-item label="Cascade windows" w="94"></menu-item>
      <menu-item label="Show windows stacked" w="122"></menu-item>
      <menu-item label="Show windows side by side" w="143"></menu-item>
      <menu-item label="Show the desktop" w="94"></menu-item><hr>
      <menu-item label="Task Manager" w="72" off></menu-item><hr>
      <menu-item label="Lock the taskbar" w="86" mark="check"></menu-item>
      <menu-item label="Taskbar settings" w="83" mark="gear"></menu-item>`);
  }
}

class AnyRunMark extends HTMLElement {
  connectedCallback() {
    shadow(this, `
      <style>
        :host { position: absolute; left: 1039px; top: 610px; width: 191px; height: 62px; display: flex; justify-content: space-between; align-items: center;
          opacity: .46; color: #fff; font: 500 52px/62px Roboto, sans-serif; }
        div { width: 62px; white-space: nowrap; }
        b { font-weight: 500; display: inline-block; transform: scaleX(.59); transform-origin: 0 50%; }
      </style>
      <div><b>ANY</b></div><ui-icon name="play" w="55" h="62"></ui-icon><div><b>RUN</b></div>`);
  }
}

class TaskBar extends HTMLElement {
  connectedCallback() {
    shadow(this, `
      <style>
        :host { position: absolute; left: 0; right: 0; bottom: 0; height: 40px; display: flex; background: linear-gradient(90deg, #00151f, #01101c 60%, #040b1c); color: #fff; }
        .btn { width: 49px; display: flex; align-items: center; justify-content: center; }
        .find { width: 288px; height: 40px; background: #f2f2f2; color: #333; display: flex; align-items: center; padding-left: 12px; box-sizing: border-box; border-bottom: 1px solid #aaa; }
        .find ui-text { margin: 2px 0 0 11px; font-size: 14px; }
        .on { box-shadow: inset 0 -2px #76b9ed; width: 40px; margin: 0 4px; }
        .tray { margin-left: auto; display: flex; align-items: center; }
        .clock { width: 62px; display: flex; flex-direction: column; align-items: center; line-height: 18px; margin: 0 13px 0 4px; }
        .peek { width: 1px; height: 40px; background: #596270; margin: 0 4px 0 20px; }
      </style>
      <div class="btn" style="width:48px"><ui-icon name="start" w="16"></ui-icon></div>
      <div class="find"><ui-icon name="search" w="16"></ui-icon><ui-text w="129">Type here to search</ui-text><ui-icon name="earth" w="72" h="39" style="margin-left:auto;margin-right:3px"></ui-icon></div>
      <div class="btn" style="width:48px;margin-right:2px"><ui-icon name="taskView" w="17" h="16"></ui-icon></div>
      <div class="btn" style="width:50px"><ui-icon name="edge" w="24"></ui-icon></div>
      <div class="btn on"><ui-icon name="explorer" w="21" h="20"></ui-icon></div>
      <div class="btn"><ui-icon name="firefox" w="24"></ui-icon></div>
      <div class="tray">
        <ui-icon name="trayUp" w="12" h="7"></ui-icon>
        <ui-icon name="meet" w="12" h="16" style="margin-left:13px"></ui-icon>
        <ui-icon name="net" w="17" h="14" style="margin:0 7px 0 9px"></ui-icon>
        <ui-icon name="sound" w="17" h="14"></ui-icon>
        <div class="clock"><ui-text w="42">2:28 PM</ui-text><ui-text w="52">9/15/2024</ui-text></div>
        <ui-icon name="note" w="16"></ui-icon>
        <div class="peek"></div>
      </div>`);
  }
}

class DeskTop extends HTMLElement {
  connectedCallback() {
    shadow(this, `
      <style>
        :host { display: block; position: relative; width: 1280px; height: 720px; overflow: hidden;
          background:
            radial-gradient(ellipse 860px 480px at 200px 620px, rgba(0, 182, 255, 1), rgba(0, 180, 255, .85) 40%, transparent),
            linear-gradient(92deg, #00a3f8 0, #00a4fa 20%, #008bea 38%, #0670d8 58%, #0554ca 76%, #0444c0 90%, #043db4 100%); }
        .grid { display: grid; grid-auto-flow: column; grid-template-rows: repeat(6, 108px); grid-auto-columns: 75px; padding-top: 7px; margin-left: -0.500px; width: 225px; }
        .behind { position: absolute; left: 1092px; top: 166px; color: #fff; }
      </style>
      <div class="grid">
        <desktop-icon icon="bin" label="Recycle Bin~60"></desktop-icon>
        <desktop-icon icon="ccleaner" link label="CCleaner~48"></desktop-icon>
        <desktop-icon icon="acrobat" link label="Adobe~35|Acrobat~42"></desktop-icon>
        <desktop-icon icon="firefox" link label="Firefox~36"></desktop-icon>
        <desktop-icon icon="chrome" link label="Google~38|Chrome~43"></desktop-icon>
        <desktop-icon icon="vlc" link label="VLC media~57|player~32"></desktop-icon>
        <desktop-icon icon="edge" link label="Microsoft~51|Edge~26"></desktop-icon>
        <desktop-icon icon="skype" link label="Skype~31"></desktop-icon>
        <desktop-icon icon="word" label="allcharacte...~66"></desktop-icon>
        <desktop-icon icon="image" label="describedo...~66"></desktop-icon>
        <desktop-icon icon="word" label="marysatur...~62"></desktop-icon>
        <desktop-icon icon="image" label="physicalnic...~68"></desktop-icon>
        <desktop-icon icon="image" label="ratesside.jpg~66"></desktop-icon>
        <desktop-icon icon="image" label="submitted...~63"></desktop-icon>
        <desktop-icon icon="image" label="trymultiple....~70"></desktop-icon>
        <desktop-icon icon="word" label="weddingfa...~65"></desktop-icon>
      </div>
      <div class="behind"><ui-text w="11">er</ui-text></div>
      <explorer-window></explorer-window>
      <task-bar></task-bar>
      <taskbar-menu></taskbar-menu>
      <anyrun-mark></anyrun-mark>`);
  }
}

customElements.define('ui-icon', UiIcon);
customElements.define('desktop-icon', DesktopIcon);
customElements.define('ribbon-group', RibbonGroup);
customElements.define('ribbon-big', RibbonBig);
customElements.define('ribbon-small', RibbonSmall);
customElements.define('explorer-ribbon', ExplorerRibbon);
customElements.define('nav-pane', NavPane);
customElements.define('file-list', FileList);
customElements.define('explorer-window', ExplorerWindow);
customElements.define('menu-item', MenuItem);
customElements.define('taskbar-menu', TaskbarMenu);
customElements.define('anyrun-mark', AnyRunMark);
customElements.define('task-bar', TaskBar);
customElements.define('desk-top', DeskTop);
// last, so that every label is measured in its final font
customElements.define('ui-text', UiText);
</script>
</body>
</html>
